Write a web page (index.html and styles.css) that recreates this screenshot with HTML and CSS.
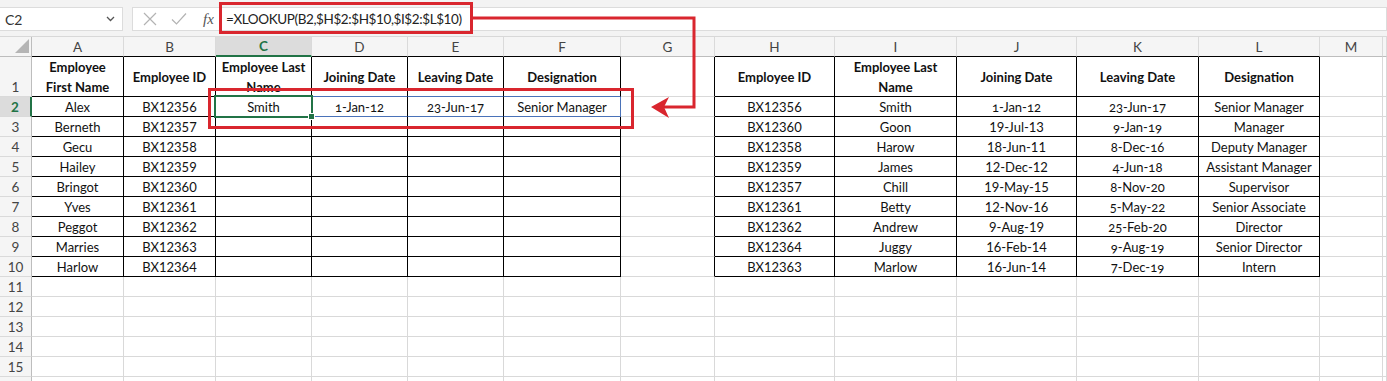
FILE: index.html
```html
<!DOCTYPE html>
<html>
<head>
<meta charset="utf-8">
<link rel="stylesheet" href="styles.css">
</head>
<body>
<div class="fbar">
  <div class="namebox"><span>C2</span><svg width="9" height="6" viewBox="0 0 9 6"><path d="M1 1l3.5 3.5L8 1" fill="none" stroke="#555" stroke-width="1.3"/></svg></div>
  <div class="fxbox">
    <svg class="ic" width="14" height="14" viewBox="0 0 14 14"><path d="M1 1l12 12M13 1L1 13" stroke="#b3b3b3" stroke-width="1.2" fill="none"/></svg>
    <svg class="ic" width="16" height="14" viewBox="0 0 16 14"><path d="M1 7.5l4.5 4.5L15 1.5" stroke="#b3b3b3" stroke-width="1.2" fill="none"/></svg>
    <span class="fx">fx</span>
  </div>
  <div class="finput">=XLOOKUP(B2,$H$2:$H$10,$I$2:$L$10)</div>
</div>

<div class="sheet">
  <div class="h corner"><svg width="14" height="14" viewBox="0 0 14 14"><path d="M14 0V14H0Z" fill="#b5b5b5"/></svg></div>
  <div class="h kb">A</div><div class="h kb">B</div><div class="h kb csel">C</div><div class="h kb">D</div><div class="h kb">E</div><div class="h kb">F</div><div class="h">G</div><div class="h kb">H</div><div class="h kb">I</div><div class="h kb">J</div><div class="h kb">K</div><div class="h kb">L</div><div class="h">M</div><div class="h"></div>

  <div class="r r1">1</div>
  <div class="c k th">Employee<br>First Name</div><div class="c k th">Employee ID</div><div class="c k th">Employee Last<br>Name</div><div class="c k th sb">Joining Date</div><div class="c k th sb">Leaving Date</div><div class="c k th sb">Designation</div><div class="c kr"></div>
  <div class="c k th">Employee ID</div><div class="c k th">Employee Last<br>Name</div><div class="c k th">Joining Date</div><div class="c k th">Leaving Date</div><div class="c k th">Designation</div><div class="c"></div><div class="c"></div>

  <div class="r rsel">2</div>
  <div class="c k">Alex</div><div class="c k">BX12356</div><div class="c k cur">Smith</div><div class="c k sb os">1-Jan-12</div><div class="c k sb os">23-Jun-17</div><div class="c k sb sr">Senior Manager</div><div class="c kr"></div>
  <div class="c k">BX12356</div><div class="c k">Smith</div><div class="c k os">1-Jan-12</div><div class="c k os">23-Jun-17</div><div class="c k">Senior Manager</div><div class="c"></div><div class="c"></div>

  <div class="r">3</div>
  <div class="c k">Berneth</div><div class="c k">BX12357</div><div class="c k"></div><div class="c k"></div><div class="c k"></div><div class="c k"></div><div class="c kr"></div>
  <div class="c k">BX12360</div><div class="c k">Goon</div><div class="c k">19-Jul-13</div><div class="c k os">9-Jan-19</div><div class="c k">Manager</div><div class="c"></div><div class="c"></div>

  <div class="r">4</div>
  <div class="c k">Gecu</div><div class="c k">BX12358</div><div class="c k"></div><div class="c k"></div><div class="c k"></div><div class="c k"></div><div class="c kr"></div>
  <div class="c k">BX12358</div><div class="c k">Harow</div><div class="c k">18-Jun-11</div><div class="c k os">8-Dec-16</div><div class="c k">Deputy Manager</div><div class="c"></div><div class="c"></div>

  <div class="r">5</div>
  <div class="c k">Hailey</div><div class="c k">BX12359</div><div class="c k"></div><div class="c k"></div><div class="c k"></div><div class="c k"></div><div class="c kr"></div>
  <div class="c k">BX12359</div><div class="c k">James</div><div class="c k">12-Dec-12</div><div class="c k os">4-Jun-18</div><div class="c k">Assistant Manager</div><div class="c"></div><div class="c"></div>

  <div class="r">6</div>
  <div class="c k">Bringot</div><div class="c k">BX12360</div><div class="c k"></div><div class="c k"></div><div class="c k"></div><div class="c k"></div><div class="c kr"></div>
  <div class="c k">BX12357</div><div class="c k">Chill</div><div class="c k">19-May-15</div><div class="c k os">8-Nov-20</div><div class="c k">Supervisor</div><div class="c"></div><div class="c"></div>

  <div class="r">7</div>
  <div class="c k">Yves</div><div class="c k">BX12361</div><div class="c k"></div><div class="c k"></div><div class="c k"></div><div class="c k"></div><div class="c kr"></div>
  <div class="c k">BX12361</div><div class="c k">Betty</div><div class="c k">12-Nov-16</div><div class="c k os">5-May-22</div><div class="c k">Senior Associate</div><div class="c"></div><div class="c"></div>

  <div class="r">8</div>
  <div class="c k">Peggot</div><div class="c k">BX12362</div><div class="c k"></div><div class="c k"></div><div class="c k"></div><div class="c k"></div><div class="c kr"></div>
  <div class="c k">BX12362</div><div class="c k">Andrew</div><div class="c k">9-Aug-19</div><div class="c k os">25-Feb-20</div><div class="c k">Director</div><div class="c"></div><div class="c"></div>

  <div class="r">9</div>
  <div class="c k">Marries</div><div class="c k">BX12363</div><div class="c k"></div><div class="c k"></div><div class="c k"></div><div class="c k"></div><div class="c kr"></div>
  <div class="c k">BX12364</div><div class="c k">Juggy</div><div class="c k">16-Feb-14</div><div class="c k os">9-Aug-19</div><div class="c k">Senior Director</div><div class="c"></div><div class="c"></div>

  <div class="r">10</div>
  <div class="c k">Harlow</div><div class="c k">BX12364</div><div class="c k"></div><div class="c k"></div><div class="c k"></div><div class="c k"></div><div class="c kr"></div>
  <div class="c k">BX12363</div><div class="c k">Marlow</div><div class="c k">16-Jun-14</div><div class="c k os">7-Dec-19</div><div class="c k">Intern</div><div class="c"></div><div class="c"></div>

  <div class="r">11</div><div class="c"></div><div class="c"></div><div class="c"></div><div class="c"></div><div class="c"></div><div class="c"></div><div class="c"></div><div class="c"></div><div class="c"></div><div class="c"></div><div class="c"></div><div class="c"></div><div class="c"></div><div class="c"></div>
  <div class="r">12</div><div class="c"></div><div class="c"></div><div class="c"></div><div class="c"></div><div class="c"></div><div class="c"></div><div class="c"></div><div class="c"></div><div class="c"></div><div class="c"></div><div class="c"></div><div class="c"></div><div class="c"></div><div class="c"></div>
  <div class="r">13</div><div class="c"></div><div class="c"></div><div class="c"></div><div class="c"></div><div class="c"></div><div class="c"></div><div class="c"></div><div class="c"></div><div class="c"></div><div class="c"></div><div class="c"></div><div class="c"></div><div class="c"></div><div class="c"></div>
  <div class="r">14</div><div class="c"></div><div class="c"></div><div class="c"></div><div class="c"></div><div class="c"></div><div class="c"></div><div class="c"></div><div class="c"></div><div class="c"></div><div class="c"></div><div class="c"></div><div class="c"></div><div class="c"></div><div class="c"></div>
  <div class="r">15</div><div class="c"></div><div class="c"></div><div class="c"></div><div class="c"></div><div class="c"></div><div class="c"></div><div class="c"></div><div class="c"></div><div class="c"></div><div class="c"></div><div class="c"></div><div class="c"></div><div class="c"></div><div class="c"></div>
  <div class="r"></div><div class="c"></div><div class="c"></div><div class="c"></div><div class="c"></div><div class="c"></div><div class="c"></div><div class="c"></div><div class="c"></div><div class="c"></div><div class="c"></div><div class="c"></div><div class="c"></div><div class="c"></div><div class="c"></div>
</div>

<svg class="annot" width="1387" height="381" viewBox="0 0 1387 381">
  <rect x="220.5" y="3.5" width="251" height="29" fill="none" stroke="#d9262e" stroke-width="3"/>
  <rect x="209.5" y="89.5" width="423" height="38" fill="none" stroke="#d9262e" stroke-width="3"/>
  <polyline points="472,18 694,18 694,107 664,107" fill="none" stroke="#d9262e" stroke-width="3"/>
  <polygon points="651,107 669,97 664,107 669,118" fill="#d9262e"/>
</svg>
</body>
</html>
```

FILE: styles.css
```css
html, body {
  margin: 0;
  padding: 0;
}
body {
  position: relative;
  width: 1387px;
  height: 381px;
  overflow: hidden;
  background: #fff;
  font-family: Lato, "Noto Sans", sans-serif;
  color: #111;
}

/* formula bar */
.fbar {
  height: 37px;
  box-sizing: border-box;
  background: #f3f3f3;
  border-bottom: 1px solid #d8d8d8;
  display: flex;
  align-items: center;
  padding-top: 2px;
}
.namebox {
  width: 123px;
  height: 24px;
  box-sizing: border-box;
  background: #fff;
  border: 1px solid #dcdcdc;
  border-left: none;
  display: flex;
  align-items: center;
  justify-content: space-between;
  padding: 0 7px 0 5px;
  font-size: 14px;
  color: #333;
}
.fxbox {
  margin-left: 9px;
  width: 87px;
  height: 24px;
  box-sizing: border-box;
  background: #fff;
  border: 1px solid #dcdcdc;
  border-right: none;
  display: flex;
  align-items: center;
  gap: 14px;
  padding-left: 10px;
}
.fx {
  font-family: "Liberation Serif", serif;
  font-style: italic;
  font-size: 15px;
  color: #555;
  margin-left: 2px;
}
.finput {
  flex: 1;
  height: 24px;
  box-sizing: border-box;
  background: #fff;
  border: 1px solid #dcdcdc;
  display: flex;
  align-items: center;
  padding-left: 6px;
  font-size: 13.5px;
  letter-spacing: -0.4px;
  color: #222;
}

/* sheet grid */
.sheet {
  display: grid;
  grid-template-columns: 32px 92px 92px 96px 96px 96px 117px 94px 120px 122px 120px 122px 121px 63px 1fr;
  grid-template-rows: 20px 40px repeat(15, 20px);
}
.sheet > div {
  box-sizing: border-box;
  display: flex;
  align-items: center;
  justify-content: center;
  text-align: center;
  white-space: nowrap;
}
.h {
  background: #f5f5f5;
  border-right: 1px solid #dadada;
  border-bottom: 1px solid #bdbdbd;
  color: #444;
  font-size: 13.5px;
}
.corner {
  justify-content: flex-end !important;
  align-items: flex-end !important;
  padding: 0 2px 3px 0;
  border-right: 1px solid #bdbdbd;
}
.r {
  background: #f5f5f5;
  border-right: 1px solid #bdbdbd;
  border-bottom: 1px solid #dadada;
  color: #444;
  font-size: 13.5px;
}
.r1 {
  align-items: flex-end !important;
  padding-bottom: 1px;
}
.csel {
  background: #dcdcdc;
  color: #217346;
  font-weight: 700;
  border-bottom: 2px solid #217346 !important;
}
.rsel {
  background: #dcdcdc;
  color: #217346;
  font-weight: 700;
  border-right: 2px solid #217346 !important;
}
.c {
  border-right: 1px solid #d9d9d9;
  border-bottom: 1px solid #d9d9d9;
  font-size: 13px;
  line-height: 20px;
  padding-top: 1px;
}
.k {
  border-right-color: #000;
  border-bottom-color: #000;
}
.kb {
  border-bottom-color: #000;
}
.kr {
  border-right-color: #000;
}
.th {
  font-weight: 700;
}
.sb {
  border-bottom-color: #4a72b8;
}
.sr {
  border-right-color: #4a72b8;
}
.os {
  font-variant-numeric: oldstyle-nums;
}
.cur {
  position: relative;
}
.cur::after {
  content: "";
  position: absolute;
  left: -2px;
  top: -2px;
  right: -2px;
  bottom: -2px;
  border: 2px solid #217346;
}
.cur::before {
  content: "";
  position: absolute;
  right: -4px;
  bottom: -4px;
  width: 5px;
  height: 5px;
  background: #217346;
  border: 1px solid #fff;
  z-index: 1;
}

.annot {
  position: absolute;
  left: 0;
  top: 0;
  pointer-events: none;
}
```
